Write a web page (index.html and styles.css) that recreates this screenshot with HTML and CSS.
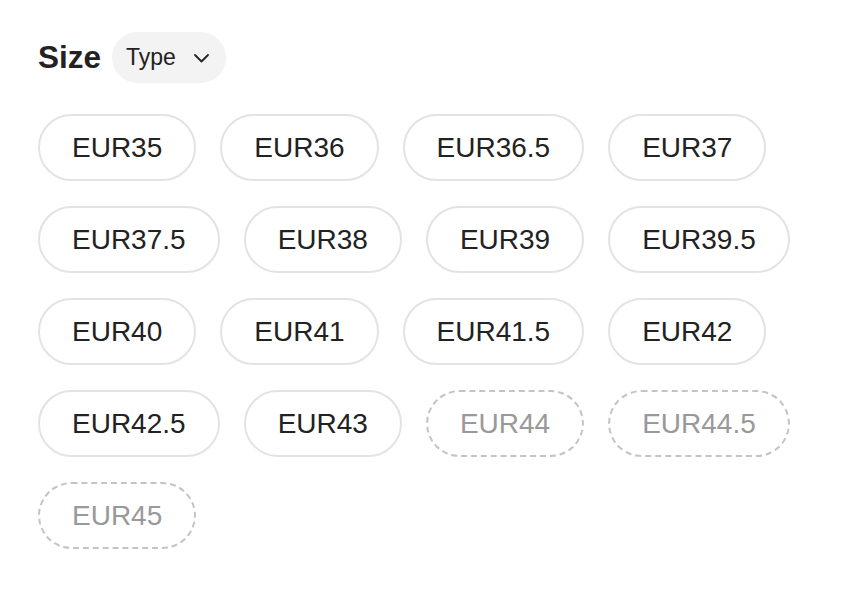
FILE: index.html
```html
<!DOCTYPE html>
<html lang="en">
<head>
  <meta charset="UTF-8" />
  <title>Size</title>
  <link rel="stylesheet" href="styles.css">
</head>
<body>
  <div class="size-header">
    <h3 class="size-title">Size</h3>
    <button class="type-select">
      Type
      <svg class="chevron" width="15" height="9" viewBox="0 0 15 9" fill="none">
        <path d="M1 1l6.5 6.5L14 1" stroke="#222" stroke-width="1.8" stroke-linecap="round" stroke-linejoin="round"/>
      </svg>
    </button>
  </div>

  <div class="size-list">
    <button class="size-chip">EUR35</button>
    <button class="size-chip">EUR36</button>
    <button class="size-chip">EUR36.5</button>
    <button class="size-chip">EUR37</button>
    <button class="size-chip">EUR37.5</button>
    <button class="size-chip">EUR38</button>
    <button class="size-chip">EUR39</button>
    <button class="size-chip">EUR39.5</button>
    <button class="size-chip">EUR40</button>
    <button class="size-chip">EUR41</button>
    <button class="size-chip">EUR41.5</button>
    <button class="size-chip">EUR42</button>
    <button class="size-chip">EUR42.5</button>
    <button class="size-chip">EUR43</button>
    <button class="size-chip sold-out">EUR44</button>
    <button class="size-chip sold-out">EUR44.5</button>
    <button class="size-chip sold-out">EUR45</button>
  </div>
</body>
</html>
```
FILE: styles.css
```css
body {
  font-family: 'Liberation Sans', Arial, sans-serif;
  background-color: #fff;
  margin: 0;
  padding: 32px 38px;
  color: #222;
}

.size-header {
  display: flex;
  align-items: center;
  gap: 11px;
}

.size-title {
  margin: 0;
  font-size: 31.5px;
  font-weight: 700;
  color: #222;
}

.type-select {
  display: flex;
  align-items: center;
  gap: 18px;
  height: 51px;
  padding: 0 17px 0 14px;
  border: none;
  border-radius: 26px;
  background-color: #f3f3f3;
  font-family: inherit;
  font-size: 23px;
  color: #222;
  cursor: pointer;
}

.chevron {
  display: block;
  margin-top: 2px;
}

.size-list {
  display: flex;
  flex-wrap: wrap;
  gap: 25px 24px;
  margin-top: 31px;
}

.size-chip {
  box-sizing: border-box;
  height: 67px;
  padding: 0 32px;
  border: 2px solid #e3e3e3;
  border-radius: 34px;
  background-color: #fff;
  font-family: inherit;
  font-size: 28px;
  color: #222;
  cursor: pointer;
}

.size-chip.sold-out {
  border: 2px dashed #c4c4c4;
  color: #999;
  cursor: default;
}
```
